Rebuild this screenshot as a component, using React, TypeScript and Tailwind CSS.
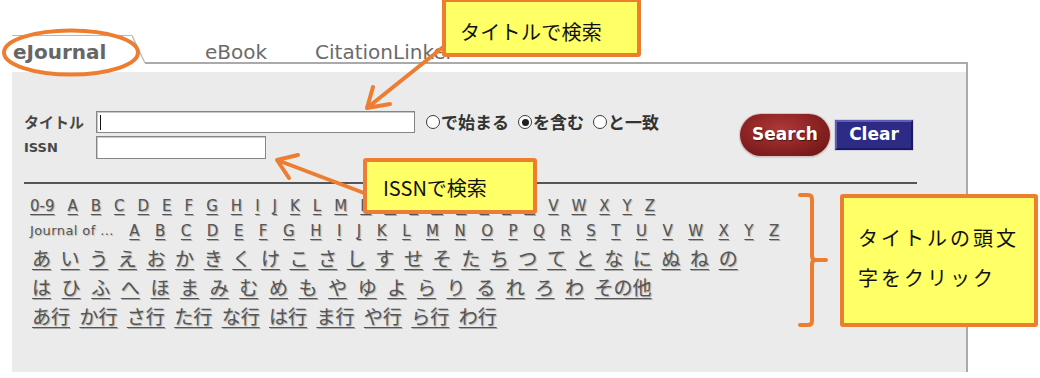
import React from "react";

const O = "#ed7d31";
const LETTERS = "ABCDEFGHIJKLMNOPQRSTUVWXYZ".split("");
const ROW3 = "あいうえおかきくけこさしすせそたちつてとなにぬねの".split("");
const ROW4 = [..."はひふへほまみむめもやゆよらりるれろわ".split(""), "その他"];
const ROW5 = ["あ行", "か行", "さ行", "た行", "な行", "は行", "ま行", "や行", "ら行", "わ行"];

const linkCls =
  "underline underline-offset-[3px] decoration-[1px] text-[#555] [text-shadow:1px_1px_1px_rgba(0,0,0,0.28)]";

function Radio({ checked, label }: { checked?: boolean; label: string }) {
  return (
    <span className="flex items-center">
      <span className="w-[14px] h-[14px] rounded-full border border-[#3a3a3a] bg-white flex items-center justify-center">
        {checked && <span className="w-[7px] h-[7px] rounded-full bg-[#222]" />}
      </span>
      <span className="ml-[1px] text-[17px] leading-[22px] font-bold text-[#333] font-['Noto_Sans_CJK_JP',sans-serif]">
        {label}
      </span>
    </span>
  );
}

export default function App() {
  return (
    <div className="relative w-[1040px] h-[378px] overflow-hidden bg-white font-['DejaVu_Sans','Noto_Sans_CJK_JP',sans-serif]">
      {/* tab strip */}
      <div className="flex h-[64px] pl-[12px]">
        <div className="mt-[35px] w-[120px] border-t border-[#b8b8b8] pt-[4px]">
          <span className="block pl-[1px] text-[20px] leading-[24px] font-bold text-[#666]">eJournal</span>
        </div>
        <svg width="13" height="64" className="shrink-0">
          <path d="M0 35.5 L13 63" stroke="#b8b8b8" strokeWidth="1.3" fill="none" />
        </svg>
        <div className="w-[823px] border-b-2 border-[#aaa] pt-[40px] pl-[60px] flex gap-[48px] text-[20px] leading-[24px] text-[#6b6b6b]">
          <span>eBook</span>
          <span>CitationLinker</span>
        </div>
      </div>

      {/* panel */}
      <div className="ml-[12px] w-[956px] h-[308px] border-r-2 border-[#aaa] pt-[8px]">
        <div className="h-[300px] bg-[#ebebeb] pl-[12px] pt-[39px]">
          {/* form */}
          <div className="flex items-center w-[893px]">
            <div className="flex flex-col gap-[3px]">
              <div className="flex items-center h-[22px]">
                <span className="w-[72px] text-[15px] font-bold text-[#474747] font-['Noto_Sans_CJK_JP',sans-serif]">
                  タイトル
                </span>
                <div className="w-[319px] h-[22px] border border-[#858585] bg-white flex items-center pl-[3px] shadow-[inset_1px_1px_0_#c8c8c8]">
                  <span className="w-px h-[15px] bg-[#111]" />
                </div>
                <div className="ml-[11px] flex items-center gap-[9px]">
                  <Radio label="で始まる" />
                  <Radio checked label="を含む" />
                  <Radio label="と一致" />
                </div>
              </div>
              <div className="flex items-center h-[23px]">
                <span className="w-[72px] text-[13px] font-bold text-[#474747]">ISSN</span>
                <div className="w-[170px] h-[23px] border border-[#858585] bg-white shadow-[inset_1px_1px_0_#c8c8c8]" />
              </div>
            </div>
            <div className="ml-auto mr-[4px] flex items-center gap-[5px]">
              <div className="w-[90px] h-[42px] rounded-full bg-[radial-gradient(ellipse_at_45%_35%,#ad3838_0%,#8a2222_55%,#661313_100%)] shadow-[0_0_0_1px_#d9c4c4,0_1px_2px_rgba(0,0,0,0.35)] flex items-center justify-center">
                <span className="text-[17px] font-bold text-white [text-shadow:1px_1px_1px_rgba(0,0,0,0.5)]">Search</span>
              </div>
              <div className="w-[78px] h-[30px] bg-[#2d2b86] border-2 border-t-[#5f5eb2] border-l-[#5f5eb2] border-r-[#1b1a5e] border-b-[#1b1a5e] shadow-[0_0_0_1px_#d0d0e2] flex items-center justify-center">
                <span className="text-[17px] font-bold text-white">Clear</span>
              </div>
            </div>
          </div>

          {/* separator */}
          <div className="mt-[23px] w-[893px] h-[2px] bg-[#555]" />

          {/* letter rows */}
          <div className="pl-[6px]">
            <div className="mt-[10px] h-[24px] flex items-center gap-[13px] text-[15px] leading-[24px]">
              <a className={linkCls}>0-9</a>
              {LETTERS.map((l) => (
                <a key={l} className={linkCls}>
                  {l}
                </a>
              ))}
            </div>
            <div className="h-[26px] flex items-center gap-[15.5px] text-[15px] leading-[26px]">
              <span className="text-[13px] tracking-[0.4px] text-[#555] [text-shadow:1px_1px_1px_rgba(0,0,0,0.2)]">
                Journal of ...
              </span>
              {LETTERS.map((l) => (
                <a key={l} className={linkCls}>
                  {l}
                </a>
              ))}
            </div>
            <div className="font-['Noto_Sans_CJK_JP',sans-serif] text-[19px] pl-[2px]">
              <div className="h-[28px] flex items-center gap-[9.6px] leading-[28px]">
                {ROW3.map((c) => (
                  <a key={c} className={linkCls}>
                    {c}
                  </a>
                ))}
              </div>
              <div className="h-[29px] flex items-center gap-[10.6px] leading-[29px]">
                {ROW4.map((c) => (
                  <a key={c} className={linkCls}>
                    {c}
                  </a>
                ))}
              </div>
              <div className="h-[30px] flex items-center gap-[9.4px] leading-[30px]">
                {ROW5.map((c) => (
                  <a key={c} className={linkCls}>
                    {c}
                  </a>
                ))}
              </div>
            </div>
          </div>
        </div>
      </div>

      {/* annotations */}
      <svg className="absolute left-0 top-0 pointer-events-none" width="1040" height="378">
        <ellipse cx="71" cy="52.5" rx="67" ry="22" fill="none" stroke={O} strokeWidth="4" />
        <g stroke={O} strokeWidth="4" strokeLinecap="round" strokeLinejoin="round" fill="none">
          <path d="M452 40 L367 108 M373 87 L367 108 L390 104" />
          <path d="M372 196 L277 160 M298 155 L277 160 L289 178" />
          <path d="M800 195 H808 Q812 195 812 199 V256 Q812 260 816 260 H826 M816 260 Q812 260 812 264 V321 Q812 325 808 325 H800" />
        </g>
      </svg>

      <div className="absolute left-[442px] top-[-2px] w-[199px] h-[59px] rounded-[3px] border-4 border-[#ed7d31] bg-[#ffff66] pl-[14px] pt-[16px] font-['Noto_Sans_CJK_JP',sans-serif] text-[20px] leading-[28px] tracking-[0.3px] text-[#111]">
        タイトルで検索
      </div>

      <div className="absolute left-[363px] top-[158px] w-[174px] h-[56px] rounded-[3px] border-4 border-[#ed7d31] bg-[#ffff66] pl-[16px] pt-[12px] font-['Noto_Sans_CJK_JP',sans-serif] text-[20px] leading-[28px] text-[#111]">
        ISSNで検索
      </div>

      <div className="absolute left-[840px] top-[194px] w-[198px] h-[133px] rounded-[3px] border-4 border-[#ed7d31] bg-[#ffff66] pl-[14px] pt-[20px] font-['Noto_Sans_CJK_JP',sans-serif] text-[20px] leading-[40px] tracking-[3px] text-[#111]">
        <div>タイトルの頭文</div>
        <div>字をクリック</div>
      </div>
    </div>
  );
}
